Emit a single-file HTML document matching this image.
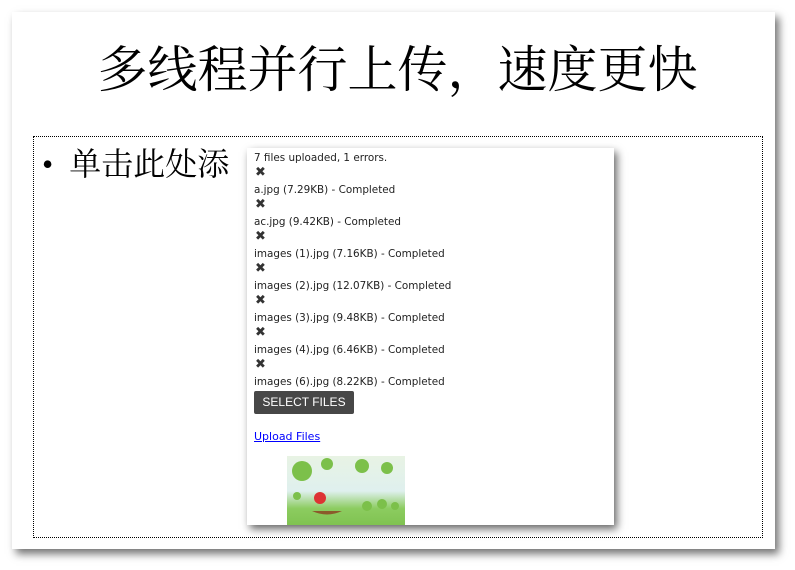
<!DOCTYPE html>
<html><head><meta charset="utf-8"><style>
html,body{margin:0;padding:0;background:#fff;width:795px;height:570px;overflow:hidden;}
.slide{position:absolute;left:12px;top:12px;width:763px;height:537px;background:#fff;box-shadow:4px 5px 8px rgba(0,0,0,0.55);}
.title{position:absolute;left:0;top:40px;width:795px;text-align:center;font-family:"Liberation Serif","Noto Serif CJK SC",serif;font-size:50px;line-height:60px;color:#000;}
.box{position:absolute;left:33px;top:136px;width:728px;height:400px;border:1px dotted #000;}
.bullet{position:absolute;left:42px;top:142px;font-family:"Liberation Serif","Noto Serif CJK SC",serif;font-size:32px;line-height:44px;}
.pop{position:absolute;left:247px;top:148px;width:367px;height:377px;background:#fff;box-shadow:3px 4px 8px rgba(0,0,0,0.6);overflow:hidden;font-family:"DejaVu Sans","Liberation Sans",sans-serif;font-size:10.4px;color:#222;}
.ln{position:absolute;left:7px;line-height:16px;}
.x{position:absolute;left:8px;font-size:13px;font-weight:bold;color:#333;line-height:14px;}
.btn{position:absolute;left:7px;top:243px;width:100px;height:23px;background:#474747;border-radius:2px;color:#fff;font-family:"Liberation Sans",sans-serif;font-size:12px;line-height:23px;text-align:center;}
.link{position:absolute;left:7px;top:282px;color:#00f;text-decoration:underline;font-size:11px;}
.img{position:absolute;left:40px;top:308px;width:118px;height:70px;background:linear-gradient(#e8f3e4 0%,#dff0ee 50%,#8ccc60 75%,#7fc250 100%);}
</style></head><body>
<div class="slide"></div>
<div class="title">多线程并行上传，速度更快</div>
<div class="box"></div>
<div class="bullet">•&nbsp;&nbsp;单击此处添</div>
<div class="pop">
<div class="ln" style="top:2px">7 files uploaded, 1 errors.</div>
<div class="x" style="top:18px">✖</div>
<div class="ln" style="top:34px">a.jpg (7.29KB) - Completed</div>
<div class="x" style="top:50px">✖</div>
<div class="ln" style="top:66px">ac.jpg (9.42KB) - Completed</div>
<div class="x" style="top:82px">✖</div>
<div class="ln" style="top:98px">images (1).jpg (7.16KB) - Completed</div>
<div class="x" style="top:114px">✖</div>
<div class="ln" style="top:130px">images (2).jpg (12.07KB) - Completed</div>
<div class="x" style="top:146px">✖</div>
<div class="ln" style="top:162px">images (3).jpg (9.48KB) - Completed</div>
<div class="x" style="top:178px">✖</div>
<div class="ln" style="top:194px">images (4).jpg (6.46KB) - Completed</div>
<div class="x" style="top:210px">✖</div>
<div class="ln" style="top:226px">images (6).jpg (8.22KB) - Completed</div>
<div class="btn">SELECT FILES</div>
<div class="link">Upload Files</div>
<div class="img">
<svg width="118" height="70"><g fill="#7cc04a"><circle cx="15" cy="15" r="10"/><circle cx="40" cy="8" r="6"/><circle cx="75" cy="10" r="7"/><circle cx="100" cy="12" r="6"/><circle cx="80" cy="50" r="5"/><circle cx="95" cy="48" r="5"/><circle cx="108" cy="50" r="4"/><circle cx="10" cy="40" r="4"/></g><circle cx="33" cy="42" r="6" fill="#d33"/><path d="M25 55 Q40 62 55 55 Z" fill="#8b5a2b"/></svg>
</div>
</div>
</body></html>
